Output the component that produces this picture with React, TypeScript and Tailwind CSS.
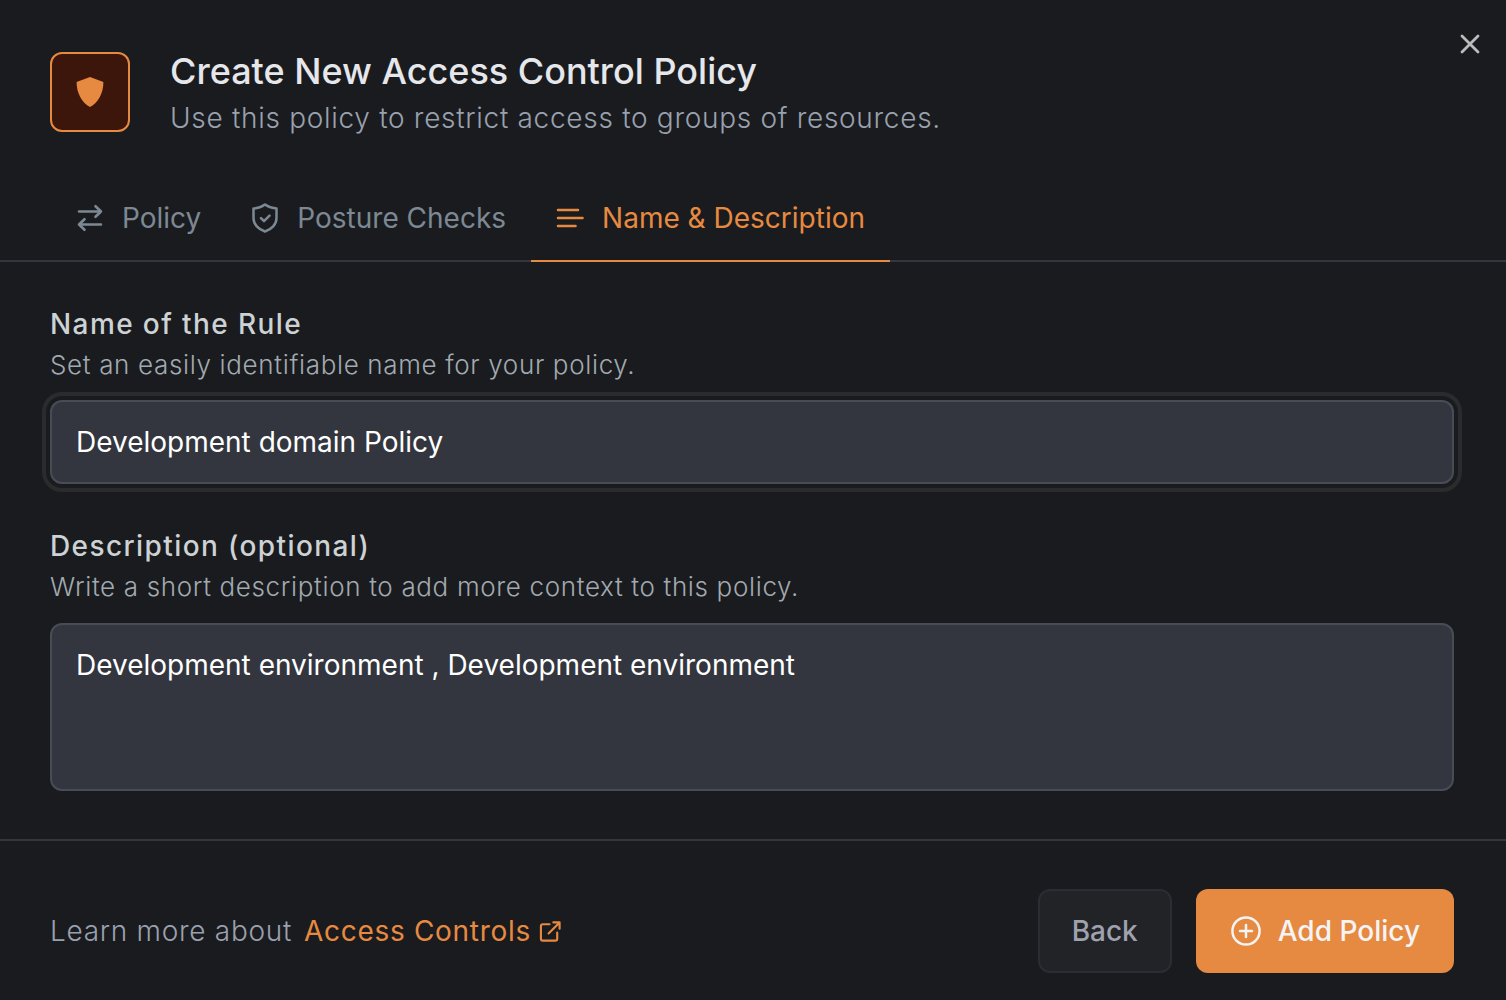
import { useState } from "react";

const tabs = ["Policy", "Posture Checks", "Name & Description"];

const stroke = {
  fill: "none",
  stroke: "currentColor",
  strokeLinecap: "round" as const,
  strokeLinejoin: "round" as const,
  "aria-hidden": true,
};

function ShieldIcon() {
  return (
    <svg viewBox="0 0 28 32" className="h-8 w-7" fill="currentColor" aria-hidden="true">
      <path d="M14 1 27.400 5.900C27.400 17.500 22 26.500 14 31 6 26.500.600 17.500.600 5.900Z" />
    </svg>
  );
}

function TabIcon({ index }: { index: number }) {
  if (index === 0)
    return (
      <svg viewBox="0 0 28 28" className="size-7" strokeWidth="2.6" {...stroke}>
        <path d="M3 7.500h22M19.500 2.200 25 7.500 19.500 12.800M25 20.500H3M8.500 15.200 3 20.500l5.500 5.300" />
      </svg>
    );
  if (index === 1)
    return (
      <svg viewBox="0 0 28 30" className="h-[30px] w-7" strokeWidth="2.5" {...stroke}>
        <path d="M14 1.500C17.500 4 21 5.300 25.500 5.500V15c0 6.500-5 11.500-11.500 13.500C7.500 26.500 2.500 21.500 2.500 15V5.500C7 5.300 10.500 4 14 1.500ZM10 15.200l3 3 5.500-5.500" />
      </svg>
    );
  return (
    <svg viewBox="0 0 28 28" className="size-7" strokeWidth="2.6" {...stroke}>
      <path d="M2 6h20M2 14h24.500M2 22h17.500" />
    </svg>
  );
}

export default function App() {
  const [active, setActive] = useState(2);
  return (
    <main className="min-h-screen bg-[#1a1b1e] font-['Inter',sans-serif] text-gray-400">
      <header className="relative flex items-start gap-10 px-[50px] pt-12">
        <div className="mt-1 flex size-20 shrink-0 items-center justify-center rounded-xl border-2 border-[#e78a41] bg-[#3d160b] text-[#e78a41]">
          <ShieldIcon />
        </div>
        <div>
          <h1 className="text-4xl leading-[46px] font-medium text-gray-200">Create New Access Control Policy</h1>
          <p className="mt-0.5 text-[28px] leading-11 font-light tracking-wide">
            Use this policy to restrict access to groups of resources.
          </p>
        </div>
        <button type="button" aria-label="Close" className="absolute top-7 right-5 text-[#bcbcbc]">
          <svg viewBox="0 0 32 32" className="size-8" strokeWidth="2.8" {...stroke}>
            <path d="m8 8 16 16M24 8 8 24" />
          </svg>
        </button>
      </header>
      <div role="tablist" className="mt-9 flex border-b-2 border-[#35363d] pl-[51px]">
        {tabs.map((tab, i) => (
          <button
            key={tab}
            type="button"
            role="tab"
            aria-selected={active === i}
            onClick={() => setActive(i)}
            className={
              "-mb-0.5 flex h-[86px] items-center gap-[18px] border-b-2 px-[25px] text-[28px] " +
              (active === i ? "border-[#e78a41] text-[#e78a41]" : "border-transparent text-[#7c8994]")
            }
          >
            <TabIcon index={i} />
            {tab}
          </button>
        ))}
      </div>
      <form className="pt-11 pr-[52px] pb-12 pl-[50px]" onSubmit={(e) => e.preventDefault()}>
        <label htmlFor="name" className="block text-[28px] leading-9 font-medium tracking-wider text-[#cdd2d4]">
          Name of the Rule
        </label>
        <p id="name-help" className="mt-1 text-[26px] leading-[38px] font-light tracking-wide text-[#a1aab1]">
          Set an easily identifiable name for your policy.
        </p>
        <input
          id="name"
          aria-describedby="name-help"
          defaultValue="Development domain Policy"
          className="mt-4 block h-21 w-full rounded-xl border-2 border-[#484c56] bg-[#33363e] px-6 text-[28px] text-white outline-4 outline-offset-4 outline-[#2a2b2d]"
        />
        <label
          htmlFor="description"
          className="mt-11 block text-[28px] leading-9 font-medium tracking-wider text-[#cdd2d4]"
        >
          Description (optional)
        </label>
        <p id="description-help" className="mt-1 text-[26px] leading-[38px] font-light tracking-wide text-[#a1aab1]">
          Write a short description to add more context to this policy.
        </p>
        <textarea
          id="description"
          aria-describedby="description-help"
          defaultValue="Development environment , Development environment"
          className="mt-[17px] block h-42 w-full resize-none rounded-xl border-2 border-[#484c56] bg-[#33363e] px-6 py-5 text-[28px] leading-10 text-white outline-none"
        />
      </form>
      <footer className="flex items-center justify-between border-t-2 border-[#35363a] pt-12 pr-[52px] pb-6 pl-[50px]">
        <p className="flex items-center gap-3 text-[28px] font-light tracking-wide">
          Learn more about
          <a href="#access-controls" className="flex items-center gap-2 font-normal text-[#e78a41]">
            Access Controls
            <svg viewBox="0 0 24 24" className="size-[23px]" strokeWidth="2.2" {...stroke}>
              <path d="M11 4.500H4A2 2 0 0 0 2 6.500V19.500A2 2 0 0 0 4 21.500H17A2 2 0 0 0 19 19.500V13M10 14 21.500 2.500M15 2.500h6.500v6.500" />
            </svg>
          </a>
        </p>
        <div className="flex gap-6">
          <button
            type="button"
            className="h-21 rounded-xl border-2 border-[#2a2d33] bg-[#222327] px-8 text-[28px] font-medium text-[#9fa1ae]"
          >
            Back
          </button>
          <button
            type="button"
            className="flex h-21 items-center gap-4 rounded-xl bg-[#e78a41] px-[34px] text-[28px] font-medium text-gray-100"
          >
            <svg viewBox="0 0 32 32" className="size-8" strokeWidth="2.5" {...stroke}>
              <circle cx="16" cy="16" r="13.600" />
              <path d="M16 10v12M10 16h12" />
            </svg>
            Add Policy
          </button>
        </div>
      </footer>
    </main>
  );
}
